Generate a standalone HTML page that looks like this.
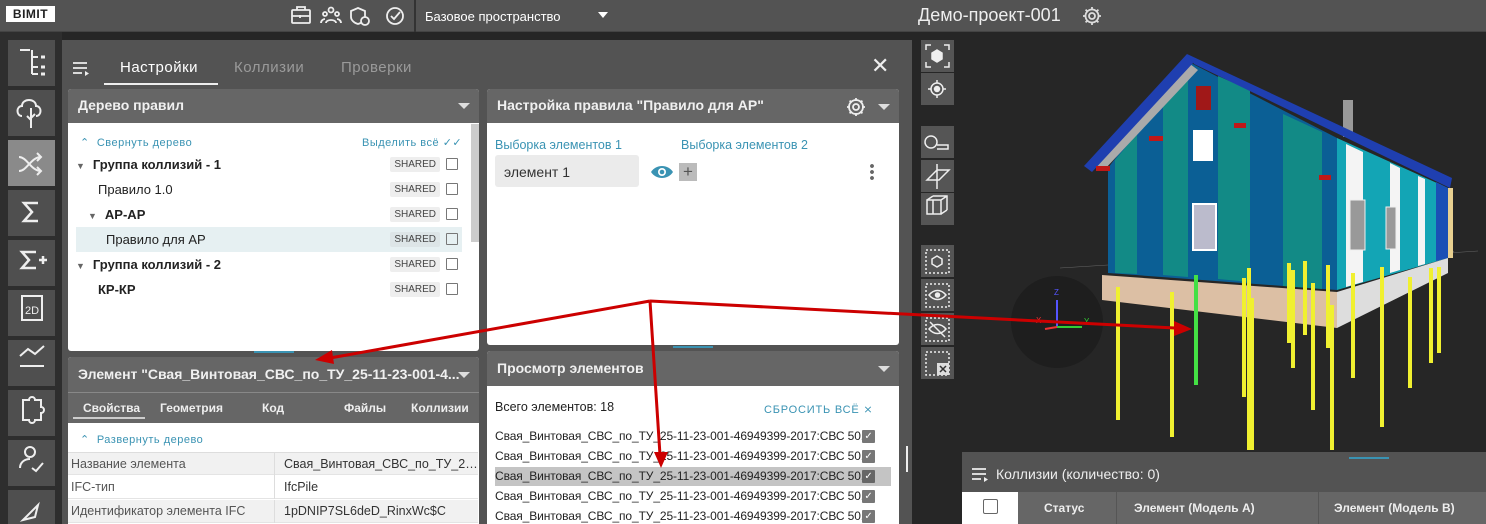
<!DOCTYPE html>
<html><head><meta charset="utf-8"><style>
*{box-sizing:border-box;margin:0;padding:0}
html,body{width:1486px;height:524px;overflow:hidden}
body{background:#262626;font-family:"Liberation Sans",sans-serif;position:relative}
.a{position:absolute}
.top{left:0;top:0;width:1486px;height:32px;background:#535353;border-bottom:1px solid #444}
.sb{left:8px;width:47px;height:46px;background:#4f4f4f}
.tb{left:921px;width:33px;height:32px;background:#555}
.hdr{background:#666;color:#f0f0f0;font-weight:bold;font-size:14px;padding-left:10px;line-height:33px;white-space:nowrap}
.tri{position:absolute;width:0;height:0;border-left:6px solid transparent;border-right:6px solid transparent;border-top:6px solid #ddd}
.row{position:absolute;left:8px;width:386px;height:25px;font-size:13px;color:#222;line-height:25px}
.sh{position:absolute;right:22px;top:5px;font-size:10px;background:#eee;color:#444;padding:0 4px;line-height:15px;border-radius:2px}
.cb{position:absolute;right:4px;top:6px;width:12px;height:12px;border:1.5px solid #777;border-radius:1px}
.blue{color:#3a93b3;white-space:nowrap}
.prow{position:absolute;left:0;width:410px;height:23px;font-size:12.5px;color:#555;line-height:23px;border-bottom:1px solid #e4e4e4;white-space:nowrap}
.prow span{position:absolute;left:206px;width:204px;overflow:hidden;text-overflow:ellipsis;padding-left:9px;border-left:1px solid #ddd;height:23px;color:#333}
.li{position:absolute;left:8px;font-size:12px;color:#222;line-height:19px;height:19px;width:382px;white-space:nowrap;overflow:hidden;letter-spacing:-0.1px}
.ck{position:absolute;right:2px;top:3px;width:13px;height:13px;background:#777;border-radius:1px;color:#fff;font-size:10px;line-height:13px;text-align:center}
</style></head><body>
<div class="a top"></div>
<div class="a" style="left:6px;top:6px;width:49px;height:16px;background:#fff;color:#222;font-weight:bold;font-size:12px;line-height:16px;text-align:center;letter-spacing:0.5px">BIMIT</div>
<svg class="a" style="left:288px;top:4px" width="125" height="24" fill="none" stroke="#eee" stroke-width="1.8">
<rect x="4" y="6" width="18" height="13" rx="1"/><path d="M9 6V3h8v3M4 12h18M12 11v3"/>
<circle cx="43" cy="6" r="2.5"/><circle cx="37" cy="10" r="2"/><circle cx="49" cy="10" r="2"/><path d="M38 19c0-4 10-4 10 0M33 19c0-3 3-4 4-4M53 19c0-3-3-4-4-4"/>
<path d="M70 4l7 3v6c0 3-3 6-7 7-4-1-7-4-7-7V7z"/><circle cx="77" cy="17" r="4" fill="#535353"/>
<circle cx="107" cy="12" r="8"/><path d="M103 12l3 3 6-7"/>
</svg>
<div class="a" style="left:414px;top:0;width:2px;height:32px;background:#333"></div>
<div class="a" style="left:425px;top:9px;color:#fff;font-size:13px">Базовое пространство</div>
<div class="tri" style="left:598px;top:12px;border-top-color:#fff;border-width:6px 5px 0"></div>
<div class="a" style="left:918px;top:5px;color:#eee;font-size:18px">Демо-проект-001</div>
<svg class="a" style="left:1081px;top:5px" width="22" height="22" fill="none" stroke="#ddd" stroke-width="1.8"><circle cx="11" cy="11" r="3"/><path d="M11 2v3M11 17v3M2 11h3M17 11h3M4.6 4.6l2.1 2.1M15.3 15.3l2.1 2.1M4.6 17.4l2.1-2.1M15.3 6.7l2.1-2.1"/><circle cx="11" cy="11" r="6.5"/></svg>

<!-- sidebar -->
<div class="a" style="left:0;top:32px;width:62px;height:492px;background:#2e2e2e"></div>
<div class="a sb" style="top:40px"></div><div class="a sb" style="top:90px"></div><div class="a sb" style="top:140px;background:#8a8a8a"></div>
<div class="a sb" style="top:190px"></div><div class="a sb" style="top:240px"></div><div class="a sb" style="top:290px"></div>
<div class="a sb" style="top:340px"></div><div class="a sb" style="top:390px"></div><div class="a sb" style="top:440px"></div><div class="a sb" style="top:490px"></div>
<svg class="a" style="left:8px;top:40px" width="47" height="484" fill="none" stroke="#eee" stroke-width="2">
<path d="M12 10h10M24 10v24M24 17h6M24 27h6M24 34h6"/><path d="M33 17h4M33 27h4M33 34h4" stroke-width="3"/>
<path d="M14 76c-6 0-6-10 0-10 0-8 14-8 14 0 6 0 6 10 0 10M23 68v20M23 80l-4-4M23 78l4-4"/>
<path d="M11 117c8 0 12 14 22 14M11 131c8 0 12-14 22-14M29 113l4 4-4 4M29 127l4 4-4 4"/>
<path d="M30 163H16l8 9-8 9h14" stroke-width="2.5"/>
<path d="M28 212H14l7 8-7 8h14M31 220h8M35 216v8" stroke-width="2.5"/>
<path d="M14 256h20v24H14z"/><text x="17" y="274" font-size="11" fill="#eee" stroke="none" font-family="Liberation Sans">2D</text>
<path d="M12 316l8-7 7 5 9-8M12 326h24"/>
<path d="M15 360h6a3 3 0 016 0h6v7a3 3 0 010 6v7h-6a3 3 0 01-6 0h-6z"/>
<circle cx="22" cy="412" r="5"/><path d="M12 428c0-6 5-9 10-9M24 428l4 3 7-8"/>
<path d="M15 480l15-15-3 12z"/>
</svg>

<!-- main panel -->
<div class="a" style="left:62px;top:40px;width:850px;height:484px;background:#535353"></div>
<svg class="a" style="left:72px;top:60px" width="20" height="16" fill="none" stroke="#eee" stroke-width="1.8"><path d="M1 3h14M1 8h14M1 13h9"/><path d="M13 11l4 2.5-4 2.5z" fill="#eee" stroke="none"/></svg>
<div class="a" style="left:120px;top:59px;color:#fff;font-size:15px;letter-spacing:0.5px">Настройки</div>
<div class="a" style="left:104px;top:83px;width:114px;height:2px;background:#eee"></div>
<div class="a" style="left:234px;top:59px;color:#9a9a9a;font-size:15px;letter-spacing:0.5px">Коллизии</div>
<div class="a" style="left:341px;top:59px;color:#9a9a9a;font-size:15px;letter-spacing:0.5px">Проверки</div>
<div class="a" style="left:871px;top:53px;color:#eee;font-size:22px">✕</div>

<!-- tree panel -->
<div class="a" style="left:68px;top:89px;width:411px;height:262px;background:#fff;border-radius:3px;overflow:hidden">
<div class="hdr" style="height:34px">Дерево правил</div><div class="tri" style="left:390px;top:14px"></div>
<div class="a" style="left:403px;top:35px;width:8px;height:118px;background:#ccc"></div>
<div class="a blue" style="left:12px;top:47px;font-size:11px;letter-spacing:0.5px">⌃ &nbsp;Свернуть дерево</div>
<div class="a blue" style="left:294px;top:47px;font-size:11px;letter-spacing:0.5px">Выделить всё ✓✓</div>
<div class="row" style="top:63px"><span style="font-size:9px;color:#666;margin-right:8px">▼</span><b>Группа коллизий - 1</b><span class="sh">SHARED</span><span class="cb"></span></div>
<div class="row" style="top:88px;padding-left:22px">Правило 1.0<span class="sh">SHARED</span><span class="cb"></span></div>
<div class="row" style="top:113px;padding-left:12px"><span style="font-size:9px;color:#666;margin-right:8px">▼</span><b>АР-АР</b><span class="sh">SHARED</span><span class="cb"></span></div>
<div class="row" style="top:138px;padding-left:30px;background:#e6f0f2">Правило для АР<span class="sh" style="background:#dde5e7">SHARED</span><span class="cb"></span></div>
<div class="row" style="top:163px"><span style="font-size:9px;color:#666;margin-right:8px">▼</span><b>Группа коллизий - 2</b><span class="sh">SHARED</span><span class="cb"></span></div>
<div class="row" style="top:188px;padding-left:22px"><b>КР-КР</b><span class="sh">SHARED</span><span class="cb"></span></div>
</div>
<div class="a" style="left:254px;top:351px;width:40px;height:2px;background:#3a93b3"></div>

<!-- element panel -->
<div class="a" style="left:68px;top:357px;width:411px;height:167px;background:#fff;border-radius:3px 3px 0 0;overflow:hidden">
<div class="hdr" style="height:35px;line-height:35px">Элемент "Свая_Винтовая_СВС_по_ТУ_25-11-23-001-4...</div><div class="tri" style="left:390px;top:15px"></div>
<div class="a" style="left:0;top:35px;width:411px;height:31px;background:#666;border-top:1px solid #888;color:#eee;font-size:12px;font-weight:bold">
<span class="a" style="left:15px;top:8px">Свойства</span><span class="a" style="left:92px;top:8px">Геометрия</span><span class="a" style="left:194px;top:8px">Код</span><span class="a" style="left:276px;top:8px">Файлы</span><span class="a" style="left:343px;top:8px">Коллизии</span>
<span class="a" style="left:5px;top:24px;width:72px;height:2px;background:#ccc"></span></div>
<div class="a blue" style="left:12px;top:76px;font-size:11px;letter-spacing:0.5px">⌃ &nbsp;Развернуть дерево</div>
<div class="prow" style="top:95px;background:#f1f1f1;border-top:1px solid #ddd"><b style="font-weight:normal;padding-left:3px">Название элемента</b><span>Свая_Винтовая_СВС_по_ТУ_25-...</span></div>
<div class="prow" style="top:119px"><b style="font-weight:normal;padding-left:3px">IFC-тип</b><span>IfcPile</span></div>
<div class="prow" style="top:143px;background:#f1f1f1"><b style="font-weight:normal;padding-left:3px">Идентификатор элемента IFC</b><span>1pDNIP7SL6deD_RinxWc$C</span></div>
</div>

<!-- rule settings panel -->
<div class="a" style="left:487px;top:89px;width:412px;height:256px;background:#fff;border-radius:3px;overflow:hidden">
<div class="hdr" style="height:34px">Настройка правила "Правило для АР"</div>
<svg class="a" style="left:358px;top:7px" width="22" height="22" fill="none" stroke="#eee" stroke-width="1.8"><circle cx="11" cy="11" r="3"/><circle cx="11" cy="11" r="7"/><path d="M11 2v3M11 17v3M2 11h3M17 11h3M4.6 4.6l2.1 2.1M15.3 15.3l2.1 2.1M4.6 17.4l2.1-2.1M15.3 6.7l2.1-2.1"/></svg>
<div class="tri" style="left:391px;top:15px"></div>
<div class="a blue" style="left:8px;top:49px;font-size:12.5px">Выборка элементов 1</div>
<div class="a blue" style="left:194px;top:49px;font-size:12.5px">Выборка элементов 2</div>
<div class="a" style="left:8px;top:66px;width:144px;height:32px;background:#ebebeb;border-radius:3px;font-size:14px;color:#333;padding:9px 0 0 9px">элемент 1</div>
<svg class="a" style="left:163px;top:75px" width="24" height="16"><path d="M1 8C6 0 18 0 23 8 18 16 6 16 1 8z" fill="#3a93b3"/><circle cx="12" cy="8" r="4" fill="#fff"/><circle cx="12" cy="8" r="2.3" fill="#3a93b3"/></svg>
<div class="a" style="left:192px;top:74px;width:18px;height:18px;background:#bbb;color:#555;font-size:17px;line-height:18px;text-align:center">+</div>
<div class="a" style="left:383px;top:74px;width:4px;height:18px;background:radial-gradient(circle,#666 1.8px,transparent 2px) 0 0/4px 6px"></div>
</div>
<div class="a" style="left:673px;top:346px;width:40px;height:2px;background:#3a93b3"></div>

<!-- view elements panel -->
<div class="a" style="left:487px;top:351px;width:412px;height:173px;background:#fff;border-radius:3px 3px 0 0;overflow:hidden">
<div class="hdr" style="height:35px;line-height:35px">Просмотр элементов</div><div class="tri" style="left:391px;top:15px"></div>
<div class="a" style="left:8px;top:49px;font-size:12.5px;color:#222">Всего элементов: 18</div>
<div class="a blue" style="left:277px;top:52px;font-size:11px;letter-spacing:0.8px">СБРОСИТЬ ВСЁ ⨯</div>
<div class="li" style="top:76px">Свая_Винтовая_СВС_по_ТУ_25-11-23-001-46949399-2017:СВС 50...<span class="ck">✓</span></div>
<div class="li" style="top:96px">Свая_Винтовая_СВС_по_ТУ_25-11-23-001-46949399-2017:СВС 50...<span class="ck">✓</span></div>
<div class="li" style="top:116px;background:#c4c4c4;width:396px">Свая_Винтовая_СВС_по_ТУ_25-11-23-001-46949399-2017:СВС 50...<span class="ck" style="right:16px;background:#666">✓</span></div>
<div class="li" style="top:136px">Свая_Винтовая_СВС_по_ТУ_25-11-23-001-46949399-2017:СВС 50...<span class="ck">✓</span></div>
<div class="li" style="top:156px">Свая_Винтовая_СВС_по_ТУ_25-11-23-001-46949399-2017:СВС 50...<span class="ck">✓</span></div>
</div>
<div class="a" style="left:906px;top:446px;width:2px;height:26px;background:#eee"></div>

<!-- viewer toolbar -->
<div class="a tb" style="top:40px"></div><div class="a tb" style="top:73px"></div>
<div class="a tb" style="top:126px"></div><div class="a tb" style="top:160px"></div><div class="a tb" style="top:193px"></div>
<div class="a tb" style="top:245px"></div><div class="a tb" style="top:279px"></div><div class="a tb" style="top:313px"></div><div class="a tb" style="top:347px"></div>
<svg class="a" style="left:921px;top:40px" width="33" height="345" fill="none" stroke="#eee" stroke-width="1.5">
<path d="M5 10V5h5M23 5h5v5M28 22v5h-5M10 27H5v-5"/><path d="M16 10l5 3v6l-5 3-5-3v-6z" fill="#eee"/>
<circle cx="16" cy="49" r="6"/><circle cx="16" cy="49" r="2.5" fill="#eee"/><path d="M16 40v3M16 55v3M7 49h3M22 49h3"/>
<circle cx="10" cy="102" r="6"/><path d="M16 105h11v4H16"/>
<path d="M16 124v25M6 140l10-10h12l-10 10z"/>
<path d="M6 160h14v14H6zM12 156h14v14M6 160l6-4M20 160l6-4M20 174l6-4M12 160v14"/>
<rect x="5" y="210" width="23" height="23" stroke-dasharray="2 2"/><path d="M16 216l5 3v5l-5 3-5-3v-5z"/>
<rect x="5" y="244" width="23" height="23" stroke-dasharray="2 2"/><path d="M8 255c5-6 12-6 17 0-5 6-12 6-17 0z"/><circle cx="16.5" cy="255" r="2" fill="#eee"/>
<rect x="5" y="278" width="23" height="23" stroke-dasharray="2 2"/><path d="M8 289c5-6 12-6 17 0-5 6-12 6-17 0zM9 282l15 15"/>
<rect x="5" y="312" width="23" height="23" stroke-dasharray="2 2"/><rect x="16" y="323" width="12" height="12" fill="#ddd" stroke="none"/><path d="M19 326l6 6M25 326l-6 6" stroke="#333"/>
</svg>

<!-- 3D scene -->
<svg class="a" style="left:954px;top:32px" width="532" height="420">
<circle cx="103" cy="290" r="46" fill="#1e1e1e"/>
<path d="M103 295v-27" stroke="#55f" stroke-width="2"/><path d="M103 295h25" stroke="#3c3" stroke-width="2"/><path d="M103 295l-12 2" stroke="#e33" stroke-width="2"/>
<text x="100" y="263" fill="#55f" font-size="8">Z</text><text x="130" y="292" fill="#3c3" font-size="8">Y</text><text x="82" y="291" fill="#e33" font-size="8">X</text>
<path d="M106 236l48-3M494 221l30-2M500 219l-10 10" stroke="#666" stroke-width=".6" fill="none"/>
<!-- gable wall -->
<polygon points="154,136 235,30 383,106 383,258 154,241" fill="#0b5f95"/>
<polygon points="161,241 161,128 183,102 183,242" fill="#128a86"/>
<polygon points="209,243 209,72 234,44 234,245" fill="#128a86"/>
<polygon points="264,247 264,44 296,58 296,250" fill="#128a86"/>
<polygon points="329,254 329,82 368,100 368,257" fill="#128a86"/>
<rect x="242" y="54" width="15" height="24" fill="#a01818"/>
<rect x="239" y="98" width="20" height="31" fill="#fff"/>
<rect x="239" y="172" width="23" height="46" fill="#bbc" stroke="#fff" stroke-width="2"/>
<!-- side wall -->
<polygon points="383,106 494,156 494,226 383,258" fill="#13a5b5"/>
<polygon points="392,112 409,120 409,250 392,255" fill="#f4f4f4"/>
<polygon points="436,131 446,136 446,238 436,241" fill="#f4f4f4"/>
<polygon points="464,144 471,147 471,232 464,234" fill="#f4f4f4"/>
<polygon points="482,150 494,156 494,226 482,229" fill="#1a4fb5"/>
<rect x="494" y="156" width="5" height="70" fill="#e8d090"/>
<rect x="396" y="168" width="15" height="50" fill="#999" stroke="#eee"/>
<rect x="432" y="175" width="10" height="42" fill="#999" stroke="#eee"/>
<!-- foundation -->
<polygon points="148,243 383,260 383,296 148,268" fill="#dcbfa4"/>
<polygon points="383,260 494,226 494,241 383,296" fill="#ddd"/>
<!-- roof -->
<rect x="389" y="68" width="10" height="37" fill="#999"/>
<polygon points="140,134 236,32 244,38 150,138" fill="#aaa"/>
<polygon points="130,134 233,22 240,30 138,140" fill="#1f3fb0"/>
<polygon points="233,22 498,146 496,156 240,32" fill="#1f3fb0"/>
<g fill="#c01818"><rect x="142" y="134" width="14" height="5"/><rect x="195" y="104" width="14" height="5"/><rect x="280" y="91" width="12" height="5"/><rect x="365" y="143" width="12" height="5"/></g>
<g stroke="#f0f030" stroke-width="4">
<path d="M164 255v133M218 260v145M290 246v119M295 236v182M298 266v152M335 231v80M339 238v98M351 229v74M359 251v127M374 233v83M378 273v145M399 241v105M428 235v160M456 245v111M477 236v95M485 235v86"/></g>
<path d="M242 243v110" stroke="#44e044" stroke-width="4"/>
</svg>

<!-- collisions bottom panel -->
<div class="a" style="left:962px;top:452px;width:524px;height:72px;background:#535353"></div>
<div class="a" style="left:1349px;top:457px;width:40px;height:2px;background:#3a93b3"></div>
<svg class="a" style="left:971px;top:466px" width="20" height="16" fill="none" stroke="#eee" stroke-width="1.8"><path d="M1 3h14M1 8h14M1 13h9"/><path d="M13 11l4 2.5-4 2.5z" fill="#eee" stroke="none"/></svg>
<div class="a" style="left:996px;top:466px;color:#eee;font-size:14px">Коллизии (количество: 0)</div>
<div class="a" style="left:962px;top:492px;width:524px;height:32px;background:#666;color:#eee;font-size:12px;font-weight:bold">
<div class="a" style="left:0;top:0;width:56px;height:32px;background:#fff"></div>
<div class="a" style="left:21px;top:7px;width:15px;height:15px;border:1.5px solid #666;border-radius:2px"></div>
<span class="a" style="left:82px;top:9px">Статус</span><span class="a" style="left:154px;top:0;width:1px;height:32px;background:#555"></span>
<span class="a" style="left:172px;top:9px">Элемент (Модель А)</span><span class="a" style="left:356px;top:0;width:1px;height:32px;background:#555"></span>
<span class="a" style="left:372px;top:9px">Элемент (Модель В)</span></div>

<!-- red arrows -->
<svg class="a" style="left:0;top:0" width="1486" height="524">
<g stroke="#c00" stroke-width="3" fill="none"><path d="M650 301L330 358M650 301L660 455M650 301L1175 328"/></g>
<polygon points="315,360 332,350 334,364" fill="#c00"/><polygon points="661,468 654,452 668,452" fill="#c00"/><polygon points="1192,329 1174,321 1174,336" fill="#c00"/>
</svg>
</body></html>
